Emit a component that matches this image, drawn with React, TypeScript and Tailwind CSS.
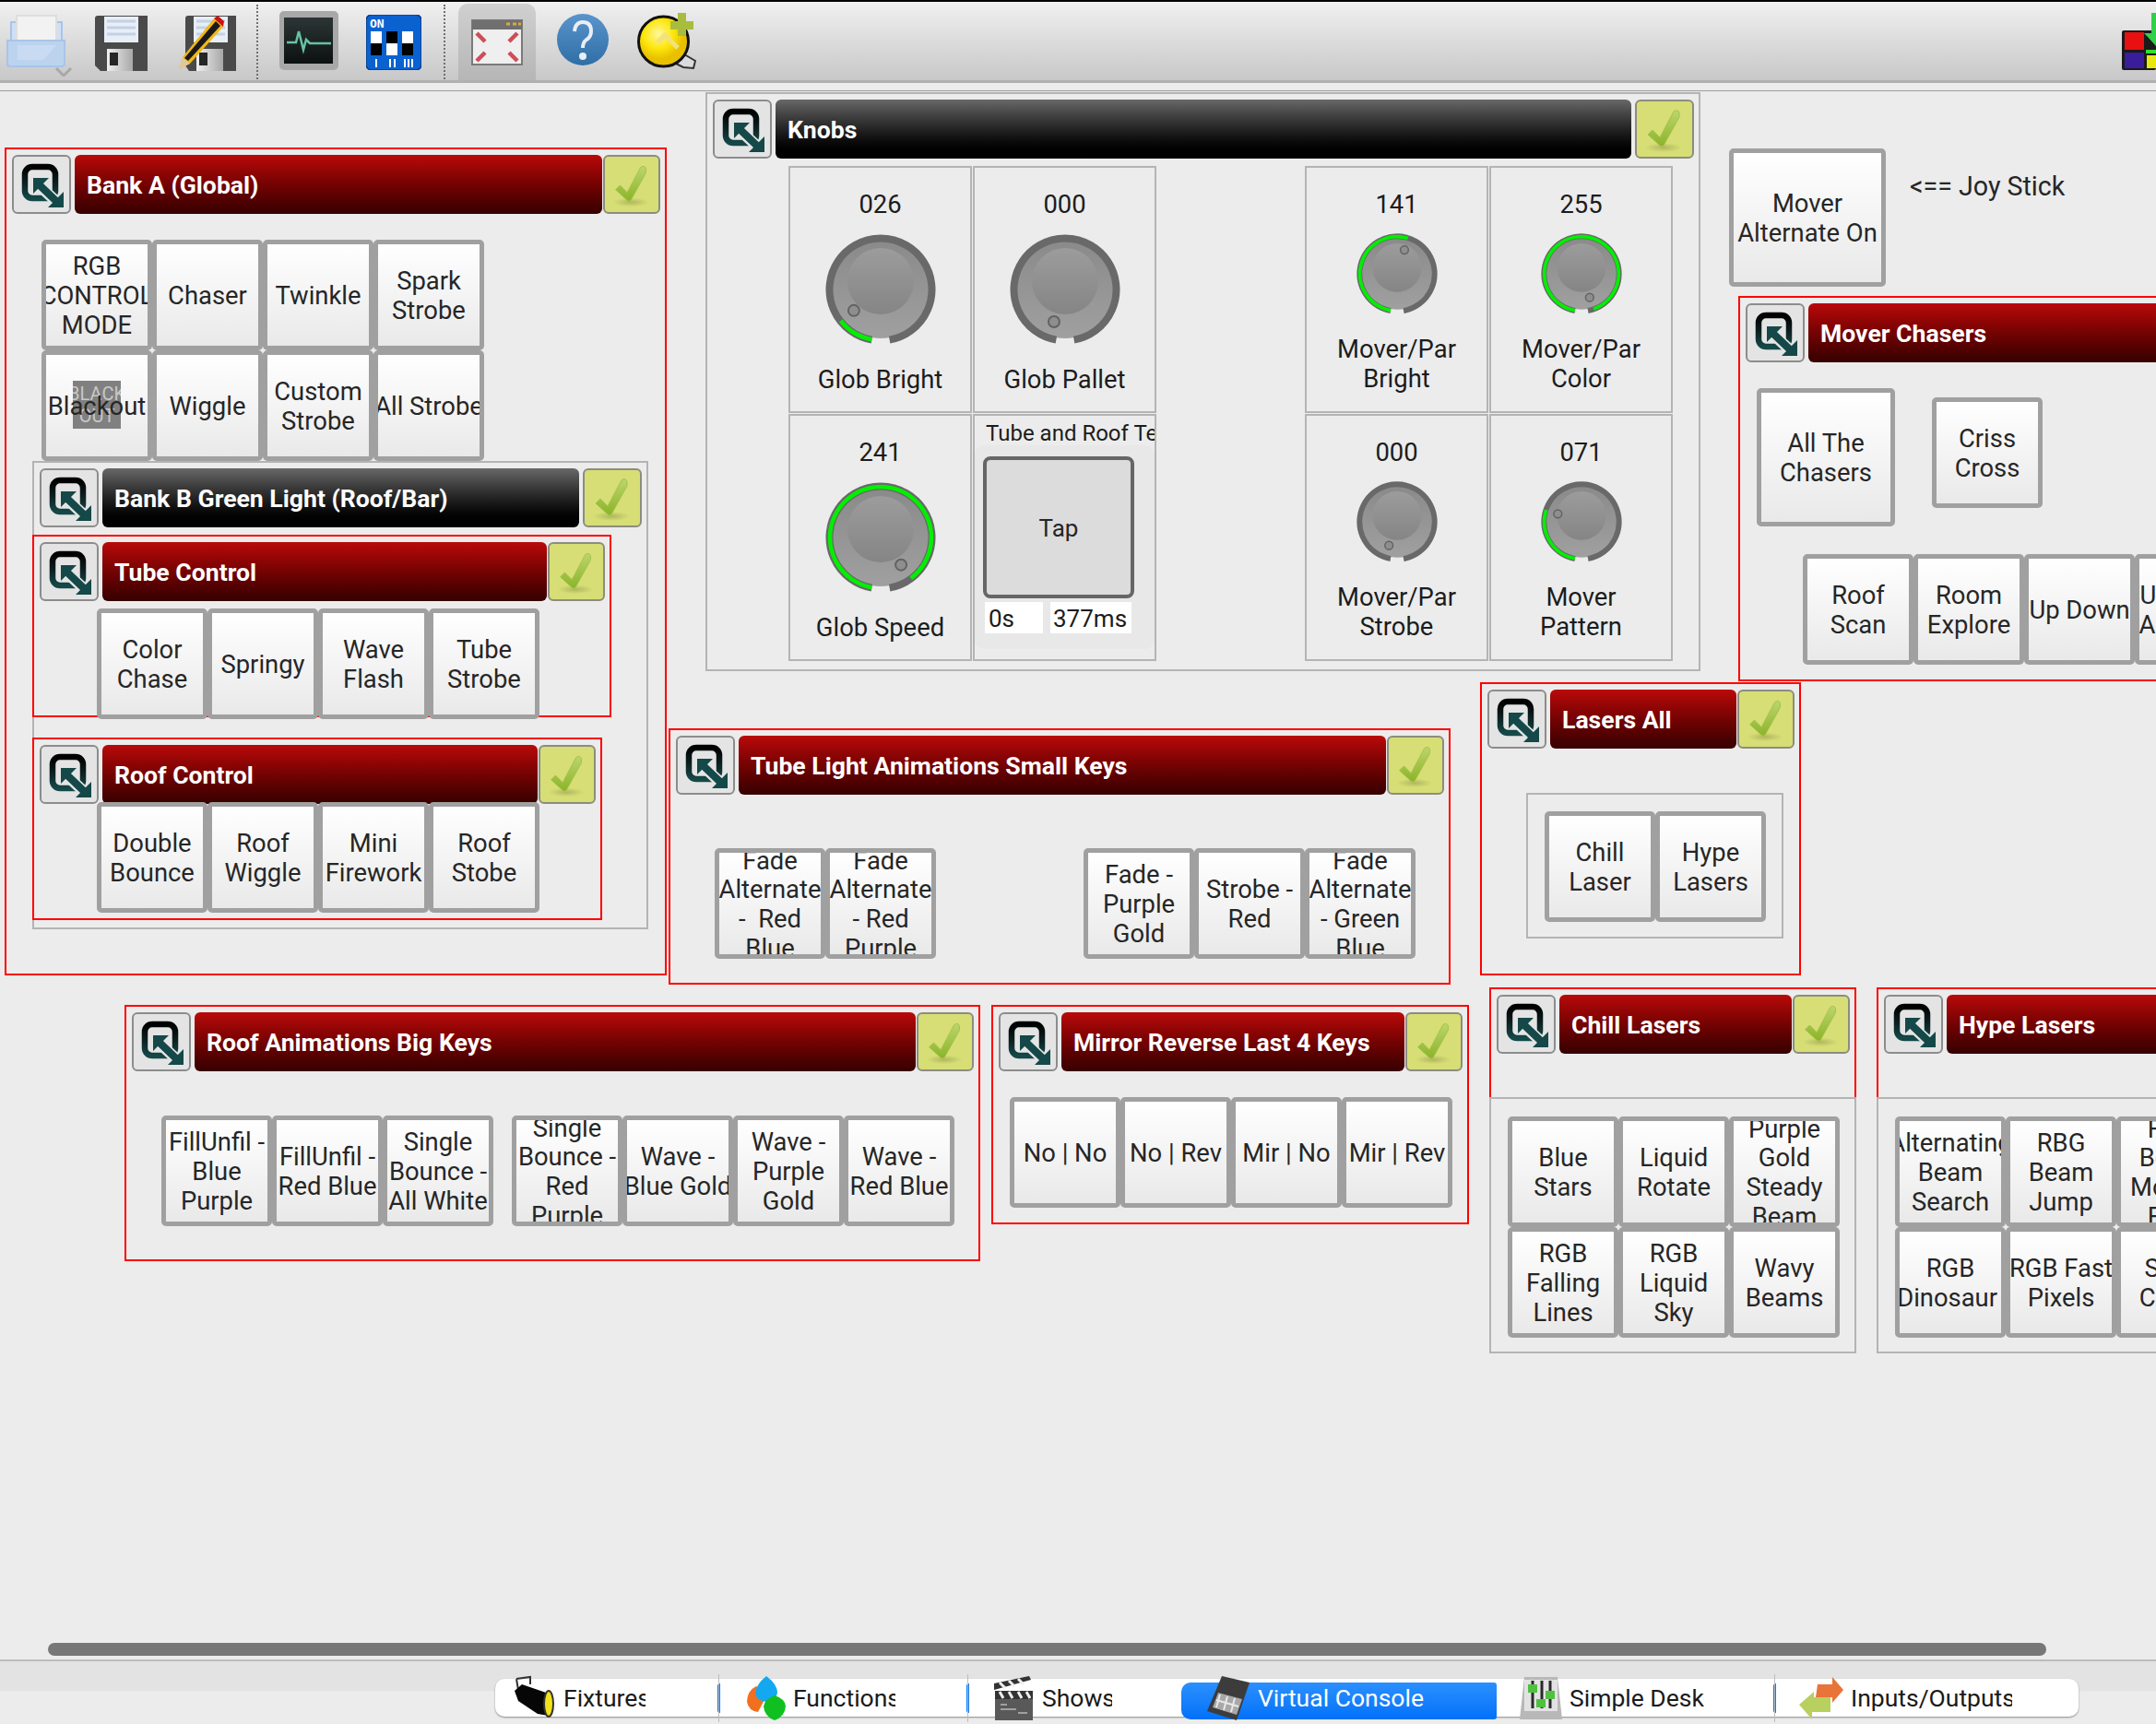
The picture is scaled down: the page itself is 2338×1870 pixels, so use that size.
import React from "react";

function polar(a: number, r: number) {
  const t = (a * Math.PI) / 180;
  return [60 - r * Math.sin(t), 60 + r * Math.cos(t)];
}
function arc(a0: number, a1: number, r: number) {
  const [x0, y0] = polar(a0, r);
  const [x1, y1] = polar(a1, r);
  return `M${x0} ${y0}A${r} ${r} 0 ${a1 - a0 > 180 ? 1 : 0} 1 ${x1} ${y1}`;
}

function Knob({ value, small }: { value: number; small?: boolean }) {
  const end = 19 + (value / 255) * 322;
  const [dx, dy] = polar(end, 37);
  return (
    <svg viewBox="0 0 120 120" className={small ? "h-[88px] w-[88px] shrink-0" : "h-[120px] w-[120px] shrink-0"}>
      <defs>
        <linearGradient id="kOuter" x1="0" y1="0" x2="0" y2="1">
          <stop offset="0" stopColor="#8a8a8a" />
          <stop offset="1" stopColor="#a0a0a0" />
        </linearGradient>
        <linearGradient id="kInner" x1="0" y1="0" x2="0" y2="1">
          <stop offset="0" stopColor="#9c9c9c" />
          <stop offset="1" stopColor="#858585" />
        </linearGradient>
      </defs>
      <circle cx="60" cy="60" r="53" fill="url(#kOuter)" />
      <circle cx="60" cy="51" r="36" fill="url(#kInner)" />
      <path d={arc(10, 350, 55.5)} fill="none" stroke="#696969" strokeWidth="8" />
      {value > 0 && <path d={arc(10, end, 55)} fill="none" stroke="#00f000" strokeWidth={small ? 5 : 4.5} />}
      <circle cx={dx} cy={dy} r="6" fill="#8e8e8e" stroke="#626262" strokeWidth="2" />
    </svg>
  );
}

function CollapseIcon() {
  return (
    <svg viewBox="0 0 60 60" className="h-[60px] w-[60px]">
      <defs>
        <linearGradient id="cGrad" x1="0" y1="0" x2="0" y2="1">
          <stop offset="0" stopColor="#000" />
          <stop offset="0.5" stopColor="#0c1f20" />
          <stop offset="1" stopColor="#154848" />
        </linearGradient>
      </defs>
      <rect x="12" y="11" width="33" height="34" rx="8" fill="none" stroke="url(#cGrad)" strokeWidth="6.5" />
      <path d="M26 30L52 54" stroke="#e4e4e4" strokeWidth="12" />
      <path d="M26 29L50 52" stroke="#154848" strokeWidth="8" />
      <path d="M21 23L38 23L21 40Z" fill="#154848" />
      <path d="M54 55L54 38L37 55Z" fill="#154848" />
    </svg>
  );
}

function CheckIcon() {
  return (
    <svg viewBox="0 0 60 60" className="h-[60px] w-[60px]">
      <defs>
        <linearGradient id="chk" x1="0" y1="0" x2="0" y2="1">
          <stop offset="0" stopColor="#bcd56c" />
          <stop offset="1" stopColor="#8ab428" />
        </linearGradient>
        <radialGradient id="chkS">
          <stop offset="0" stopColor="#8b8f4a" stopOpacity="0.5" />
          <stop offset="1" stopColor="#8b8f4a" stopOpacity="0" />
        </radialGradient>
      </defs>
      <ellipse cx="29" cy="50" rx="20" ry="5" fill="url(#chkS)" />
      <path d="M12 36L17 31L25 39L40 11Q44 8 46 12L46 17L29 48Q26 50 24 47Z" fill="url(#chk)" stroke="#a6c24a" strokeWidth="1" />
    </svg>
  );
}

function Frame({
  pos,
  title,
  dark,
  children,
}: {
  pos: string;
  title: string;
  dark?: boolean;
  children?: React.ReactNode;
}) {
  return (
    <section className={`absolute pl-[6px] pr-[5px] pt-[6px] ${pos}`}>
      <div className="flex h-[64px]">
        <div className="flex w-[64px] shrink-0 items-center justify-center rounded-[6px] border-2 border-[#8c8c8c] bg-[#e4e4e4]">
          <CollapseIcon />
        </div>
        <div
          className={
            dark
              ? "ml-[4px] flex min-w-0 flex-1 items-center rounded-[6px] bg-gradient-to-b from-[#686868] to-[#000000] pl-[13px] pt-[2px] text-[26.6px] font-bold text-white"
              : "ml-[4px] flex min-w-0 flex-1 items-center rounded-[6px] bg-gradient-to-b from-[#ba0a0a] to-[#360000] pl-[13px] pt-[2px] text-[26.6px] font-bold text-white"
          }
        >
          <span className="whitespace-nowrap">{title}</span>
        </div>
        <div
          className={
            dark
              ? "ml-[4px] flex w-[64px] shrink-0 items-center justify-center rounded-[6px] border-2 border-[#8c8c80] bg-[#d6de75]"
              : "ml-[1px] flex w-[62px] shrink-0 items-center justify-center rounded-[6px] border-2 border-[#8c8c80] bg-[#d6de75]"
          }
        >
          <CheckIcon />
        </div>
      </div>
      {children}
    </section>
  );
}

function Btn({ lines, size = "h-[120px] w-[120px]", children }: { lines: string[]; size?: string; children?: React.ReactNode }) {
  return (
    <button
      className={`relative flex shrink-0 flex-col items-center justify-center overflow-hidden rounded-[5px] border-[5px] border-[#a0a0a0] bg-gradient-to-b from-[#ffffff] to-[#e9e9e9] pt-[4px] text-[27.4px] leading-[31.7px] text-[#262626] ${size}`}
    >
      {children}
      {lines.map((l, i) => (
        <span key={i} className="relative whitespace-pre">
          {l}
        </span>
      ))}
    </button>
  );
}

function KnobCell({ value, label, small }: { value: string; label: string[]; small?: boolean }) {
  return (
    <div className="flex h-[268px] w-[199px] flex-col items-center border-2 border-[#b4b4b4] text-[27.4px] leading-[32px] text-[#1c1c1c]">
      <div className="mt-[24px] h-[32px]">{value}</div>
      <div className={small ? "mt-[15px]" : "mt-[16px]"}>
        <Knob value={Number(value)} small={small} />
      </div>
      <div className="mt-[22px] text-center">
        {label.map((l) => (
          <div key={l} className="whitespace-nowrap">
            {l}
          </div>
        ))}
      </div>
    </div>
  );
}

function Toolbar() {
  return (
    <header className="flex h-[90px] shrink-0 border-t-2 border-b-[3px] border-t-black border-b-[#b0b0b0] bg-gradient-to-b from-[#f0f0f0] to-[#c8c8c8]">
      <svg viewBox="0 0 71 68" className="ml-[7px] mt-[13px] h-[68px] w-[71px] shrink-0">
        <rect x="5" y="9" width="55" height="26" fill="#cfe0f5" stroke="#a8c4e8" strokeWidth="2" />
        <rect x="11" y="2" width="43" height="30" fill="#f2f2f2" stroke="#dedede" strokeWidth="2" />
        <path d="M1 29H63V54Q63 57 60 57H4Q1 57 1 54Z" fill="#bcd3ef" stroke="#a9c4e8" strokeWidth="2" />
        <path d="M12 34H54L40 50H12Z" fill="#c8dbf3" />
        <path d="M54 59L62 67L70 59" fill="none" stroke="#a8a8a8" strokeWidth="3" />
      </svg>
      <svg viewBox="0 0 57 60" className="ml-[25px] mt-[15px] h-[60px] w-[57px] shrink-0">
        <defs>
          <linearGradient id="shut" x1="0" y1="0" x2="1" y2="0">
            <stop offset="0" stopColor="#f0f0f0" />
            <stop offset="1" stopColor="#a8a8a8" />
          </linearGradient>
        </defs>
        <path d="M0 3Q0 0 3 0H57V60H6L0 54Z" fill="#4b4a4b" />
        <rect x="10" y="1" width="37" height="28" fill="#e8eef6" />
        <path d="M13 6H44M13 13H44M13 20H44" stroke="#c3d1e4" strokeWidth="3" />
        <path d="M13 36H41V60H13Z" fill="url(#shut)" />
        <rect x="16" y="40" width="9" height="14" fill="#262626" />
      </svg>
      <svg viewBox="0 0 63 60" className="ml-[33px] mt-[15px] h-[60px] w-[63px] shrink-0">
        <path d="M8 3Q8 0 11 0H63V60H12L8 54Z" fill="#4b4a4b" />
        <rect x="17" y="1" width="37" height="28" fill="#e8eef6" />
        <path d="M20 6H51M20 13H51M20 20H51" stroke="#c3d1e4" strokeWidth="3" />
        <path d="M20 36H49V60H20Z" fill="url(#shut)" />
        <rect x="23" y="40" width="9" height="14" fill="#262626" />
        <path d="M39 3L49 12L13 52L1 58L5 45Z" fill="#f0b818" />
        <path d="M41 6L46 11L11 49L7 46Z" fill="#1a1a1a" />
        <path d="M5 45L13 52L1 58Z" fill="#e0c89a" />
        <path d="M39 3L43 0L50 6L49 12Z" fill="#d01010" />
      </svg>
      <div className="ml-[22px] mt-[3px] h-[81px] border-l-2 border-dotted border-[#707070]" />
      <svg viewBox="0 0 64 64" className="ml-[23px] mt-[10px] h-[64px] w-[64px] shrink-0">
        <defs>
          <linearGradient id="scr" x1="0" y1="0" x2="0" y2="1">
            <stop offset="0" stopColor="#2c3535" />
            <stop offset="1" stopColor="#0c1010" />
          </linearGradient>
        </defs>
        <rect x="0" y="0" width="64" height="64" rx="5" fill="#a8a8a8" />
        <rect x="5" y="7" width="53" height="50" fill="url(#scr)" />
        <path d="M8 34H18L21 22L26 42L29 31L33 35H56" fill="none" stroke="#66c2a5" strokeWidth="2.5" />
      </svg>
      <svg viewBox="0 0 60 60" className="ml-[30px] mt-[14px] h-[60px] w-[60px] shrink-0">
        <rect x="0" y="0" width="60" height="60" rx="6" fill="#0a62d0" stroke="#053c88" strokeWidth="1.5" />
        <rect x="5" y="18" width="12" height="13" fill="#fff" />
        <rect x="5" y="31" width="12" height="13" fill="#000" />
        <rect x="22" y="18" width="12" height="13" fill="#000" />
        <rect x="22" y="31" width="12" height="13" fill="#fff" />
        <rect x="39" y="18" width="12" height="13" fill="#fff" />
        <rect x="39" y="31" width="12" height="13" fill="#000" />
        <text x="4" y="14" fontSize="13" fontWeight="700" fill="#fff" fontFamily="'DejaVu Sans Mono', monospace">ON</text>
        <path d="M11 48V57M26 48V57M31 48V57M42 48V57M46 48V57M50 48V57" stroke="#fff" strokeWidth="2" />
      </svg>
      <div className="ml-[24px] mt-[3px] h-[81px] border-l-2 border-dotted border-[#707070]" />
      <div className="ml-[14px] mt-[2px] flex h-[83px] w-[84px] shrink-0 items-center justify-center rounded-t-[10px] bg-gradient-to-b from-[#d0d0d0] to-[#b6b6b6]">
        <svg viewBox="0 0 56 50" className="h-[50px] w-[56px]">
          <rect x="1" y="1" width="54" height="48" fill="#efefef" stroke="#7a7a7a" strokeWidth="2" />
          <rect x="1" y="1" width="54" height="10" fill="#6f6f6f" />
          <path d="M38 5H42M45 5H49M51 5H54" stroke="#d8aa40" strokeWidth="3" />
          <path d="M6 15L15 24M50 15L41 24M6 45L15 36M50 45L41 36" stroke="#c8323c" strokeWidth="4.5" opacity="0.85" />
        </svg>
      </div>
      <svg viewBox="0 0 58 60" className="ml-[22px] mt-[12px] h-[60px] w-[58px] shrink-0">
        <defs>
          <linearGradient id="hlp" x1="0" y1="0" x2="0" y2="1">
            <stop offset="0" stopColor="#5a94cc" />
            <stop offset="1" stopColor="#2f6ea6" />
          </linearGradient>
        </defs>
        <circle cx="29" cy="29" r="28" fill="url(#hlp)" />
        <path d="M20 20Q21 10 29 10Q38 10 38 20Q38 26 33 29Q29 32 29 38" fill="none" stroke="#e8eef4" strokeWidth="4" />
        <circle cx="29" cy="47" r="4" fill="#e8eef4" />
      </svg>
      <svg viewBox="0 0 64 62" className="ml-[30px] mt-[12px] h-[62px] w-[64px] shrink-0">
        <defs>
          <radialGradient id="blb" cx="0.4" cy="0.35">
            <stop offset="0" stopColor="#fff7a0" />
            <stop offset="0.6" stopColor="#fde60a" />
            <stop offset="1" stopColor="#e8c000" />
          </radialGradient>
        </defs>
        <path d="M46 42L63 52L61 60L50 59L40 54Z" fill="#d8dcdc" stroke="#333" strokeWidth="2" />
        <circle cx="28.5" cy="31" r="27" fill="url(#blb)" stroke="#111" strokeWidth="3" />
        <path d="M22 32L30 24L36 30L44 38" fill="none" stroke="#f2e27a" strokeWidth="5" />
        <path d="M44 0H53V9H61V18H53V25H44V18H36V9H44Z" fill="#a9bd3c" />
      </svg>
      <svg viewBox="0 0 37 62" className="ml-auto mt-[12px] h-[62px] w-[37px] shrink-0">
        <rect x="0" y="19" width="37" height="43" fill="#1a1a1a" rx="2" />
        <rect x="3" y="21" width="21" height="19" fill="#e81010" />
        <rect x="3" y="43" width="21" height="17" fill="#3a1d9a" />
        <rect x="27" y="46" width="10" height="14" fill="#e8e810" />
        <rect x="26" y="40" width="11" height="4" fill="#30e030" />
        <path d="M32 0H37V36L28 26L24 22H32Z" fill="#30d048" />
      </svg>
    </header>
  );
}

function Tab({ width, label, textW, icon, active, mark }: { width: string; label: string; textW: string; icon: React.ReactNode; active?: boolean; mark?: boolean }) {
  return (
    <div className={`relative flex h-full shrink-0 items-center ${width}`}>
      {active && <div className="absolute inset-x-0 top-[4px] -bottom-[3px] rounded-l-[10px] rounded-r-[3px] bg-gradient-to-b from-[#2a90ff] to-[#0070f8]" />}
      {mark && <div className="absolute -left-[1px] top-[5px] h-[32px] w-[3px] rounded-l-full bg-[#0a78f0]" />}
      {mark && <div className="absolute left-0 -top-[5px] h-[52px] w-px bg-[#bdbdbd]" />}
      {icon}
      <span className={`relative overflow-hidden whitespace-nowrap text-[26.5px] leading-[32px] ${textW} ${active ? "text-white" : "text-[#1a1a1a]"}`}>{label}</span>
    </div>
  );
}

function Tabs() {
  return (
    <nav className="ml-[537px] mt-[19px] flex h-[41px] w-[1717px] rounded-[10px] bg-white shadow-[0_1px_2px_#8a8a8a]">
      <Tab
        width="w-[242px]"
        label="Fixtures"
        textW="ml-[8px] w-[89px]"
        icon={
          <svg viewBox="0 0 46 46" className="relative ml-[20px] h-[46px] w-[46px] shrink-0 overflow-visible">
            <path d="M3 2L18 0L18 8M3 2L5 14" fill="none" stroke="#333" strokeWidth="2" />
            <path d="M1 15L9 8L38 18L38 42L26 40L5 26Z" fill="#060606" />
            <ellipse cx="38" cy="29" rx="5" ry="14" fill="#f2e21c" stroke="#333" strokeWidth="2" />
          </svg>
        }
      />
      <Tab
        width="w-[270px]"
        mark
        label="Functions"
        textW="ml-[8px] w-[111px]"
        icon={
          <svg viewBox="0 0 42 48" className="relative ml-[31px] h-[48px] w-[42px] shrink-0 overflow-visible">
            <path d="M10 11Q0 16 0 28Q2 38 12 39L22 20Z" fill="#f07020" />
            <path d="M21 0Q33 9 33 18Q32 27 21 28Q10 27 9 18Q10 9 21 0Z" fill="#14a8f0" />
            <path d="M30 21Q42 25 42 33Q41 44 30 48Q19 44 18 33Q19 25 30 21Z" fill="#10c020" />
          </svg>
        }
      />
      <Tab
        width="w-[232px]"
        mark
        label="Shows"
        textW="ml-[10px] w-[76px]"
        icon={
          <svg viewBox="0 0 42 48" className="relative ml-[29px] h-[48px] w-[42px] shrink-0 overflow-visible">
            <path d="M0 15L40 4L38 0L0 8Z" fill="#333" />
            <path d="M6 7L12 13M16 5L22 11M26 3L32 9" stroke="#eee" strokeWidth="3" />
            <rect x="1" y="16" width="41" height="9" fill="#333" />
            <path d="M6 17L10 24M16 17L20 24M26 17L30 24M35 17L39 24" stroke="#eee" strokeWidth="3" />
            <rect x="1" y="25" width="41" height="23" fill="#595959" />
            <path d="M7 31H14M7 36H24M26 40H36" stroke="#a0a0a0" strokeWidth="2" />
          </svg>
        }
      />
      <Tab
        width="w-[342px]"
        active
        label="Virtual Console"
        textW="ml-[9px] w-[182px]"
        icon={
          <svg viewBox="0 0 46 48" className="relative ml-[28px] h-[48px] w-[46px] shrink-0 overflow-visible">
            <path d="M16 0L46 7L32 48L0 38Z" fill="#3c3c3c" />
            <path d="M12 18L38 25L32 42L6 34Z" fill="#a8a8a8" />
            <path d="M10 26L34 33M14 20L10 34M22 22L18 37M30 24L26 39" stroke="#e8e8e8" strokeWidth="2" />
          </svg>
        }
      />
      <Tab
        width="w-[301px]"
        label="Simple Desk"
        textW="ml-[8px] w-[146px]"
        icon={
          <svg viewBox="0 0 46 46" className="relative ml-[25px] h-[46px] w-[46px] shrink-0 overflow-visible">
            <path d="M5 0H41L46 46H0Z" fill="#b8b8b8" />
            <rect x="5" y="3" width="36" height="34" fill="#e2e2e2" />
            <path d="M14 4V34M24 4V34M33 4V34" stroke="#2a2a2a" strokeWidth="3" />
            <rect x="9" y="8" width="10" height="9" fill="#50c040" />
            <rect x="18" y="24" width="10" height="9" fill="#50c040" />
            <rect x="28" y="15" width="10" height="9" fill="#50c040" />
          </svg>
        }
      />
      <Tab
        width="w-[329px]"
        mark
        label="Inputs/Outputs"
        textW="ml-[7px] w-[175px]"
        icon={
          <svg viewBox="0 0 49 46" className="relative ml-[27px] h-[46px] w-[49px] shrink-0 overflow-visible">
            <path d="M20 8H36V0L48 14L36 28V22H18Z" fill="#e8743a" />
            <path d="M34 22H16V16L0 30L14 46V38H34Z" fill="#b8d060" />
          </svg>
        }
      />
    </nav>
  );
}

export default function App() {
  return (
    <div className="flex h-[1870px] w-[2338px] flex-col overflow-hidden bg-[#ececec] font-['Roboto',sans-serif]">
      <Toolbar />
      <div className="h-[9px] shrink-0 border-b border-[#9c9c9c]" />
      <main className="relative min-h-0 flex-1 overflow-hidden">
        {/* Bank A */}
        <Frame pos="left-[5px] top-[61px] h-[898px] w-[718px] border-2 border-[#ff0000]" title="Bank A (Global)">
          <div className="absolute left-[38px] top-[98px] grid grid-cols-[repeat(4,120px)]">
            <Btn lines={["RGB", "CONTROL", "MODE"]} />
            <Btn lines={["Chaser"]} />
            <Btn lines={["Twinkle"]} />
            <Btn lines={["Spark", "Strobe"]} />
            <Btn lines={["Blackout"]}>
              <span className="absolute left-[29px] top-[28px] flex h-[52px] w-[52px] flex-col items-center justify-center overflow-hidden bg-[#808080] text-[20px] leading-[24px] text-[#c8c8c8]">
                <span>BLACK</span>
                <span>OUT</span>
              </span>
            </Btn>
            <Btn lines={["Wiggle"]} />
            <Btn lines={["Custom", "Strobe"]} />
            <Btn lines={["All Strobe"]} />
          </div>
          <Frame pos="left-[28px] top-[338px] h-[508px] w-[668px] border-2 border-[#b4b4b4]" title="Bank B Green Light (Roof/Bar)" dark>
            <Frame pos="-left-[2px] top-[78px] h-[198px] w-[628px] border-2 border-[#ff0000]" title="Tube Control">
              <div className="absolute left-[68px] top-[78px] flex">
                <Btn lines={["Color", "Chase"]} />
                <Btn lines={["Springy"]} />
                <Btn lines={["Wave", "Flash"]} />
                <Btn lines={["Tube", "Strobe"]} />
              </div>
            </Frame>
            <Frame pos="-left-[2px] top-[298px] h-[198px] w-[618px] border-2 border-[#ff0000]" title="Roof Control">
              <div className="absolute left-[68px] top-[68px] flex">
                <Btn lines={["Double", "Bounce"]} />
                <Btn lines={["Roof", "Wiggle"]} />
                <Btn lines={["Mini", "Firework"]} />
                <Btn lines={["Roof", "Stobe"]} />
              </div>
            </Frame>
          </Frame>
        </Frame>

        {/* Knobs */}
        <Frame pos="left-[765px] top-[1px] h-[628px] w-[1079px] border-2 border-[#b4b4b4]" title="Knobs" dark>
          <div className="absolute left-[88px] top-[78px] grid grid-cols-[repeat(2,199px)] gap-[1px]">
            <KnobCell value="026" label={["Glob Bright"]} />
            <KnobCell value="000" label={["Glob Pallet"]} />
            <KnobCell value="241" label={["Glob Speed"]} />
            <div className="flex h-[268px] w-[199px] flex-col overflow-hidden border-2 border-[#b4b4b4]">
              <div className="h-[32px] shrink-0 whitespace-nowrap pl-[12px] pt-[6px] text-[24px] leading-[26px] text-[#1c1c1c]">Tube and Roof Tempo</div>
              <div className="mb-[11px] flex-1 rounded-[10px] bg-[#e8e8e8] pl-[9px] pt-[12px]">
                <div className="flex h-[154px] w-[164px] items-center justify-center rounded-[8px] border-4 border-[#666666] bg-[#dcdcdc] pt-[2px] text-[26px] text-[#262626]">Tap</div>
                <div className="ml-[2px] mt-[4px] flex gap-[8px] text-[26px] leading-[36px] text-[#1c1c1c]">
                  <div className="h-[34px] w-[63px] bg-white pl-[4px]">0s</div>
                  <div className="h-[34px] w-[88px] bg-white pl-[3px]">377ms</div>
                </div>
              </div>
            </div>
          </div>
          <div className="absolute left-[648px] top-[78px] grid grid-cols-[repeat(2,199px)] gap-[1px]">
            <KnobCell small value="141" label={["Mover/Par", "Bright"]} />
            <KnobCell small value="255" label={["Mover/Par", "Color"]} />
            <KnobCell small value="000" label={["Mover/Par", "Strobe"]} />
            <KnobCell small value="071" label={["Mover", "Pattern"]} />
          </div>
        </Frame>

        {/* Free-standing mover button + label */}
        <div className="absolute left-[1875px] top-[62px]">
          <Btn lines={["Mover", "Alternate On"]} size="h-[150px] w-[170px]" />
        </div>
        <div className="absolute left-[2071px] top-[87px] whitespace-nowrap text-[28.6px] leading-[32px] text-[#262626]">{"<== Joy Stick"}</div>

        {/* Mover Chasers */}
        <Frame pos="left-[1885px] top-[222px] h-[418px] w-[700px] border-2 border-[#ff0000]" title="Mover Chasers">
          <div className="absolute left-[18px] top-[98px]">
            <Btn lines={["All The", "Chasers"]} size="h-[150px] w-[150px]" />
          </div>
          <div className="absolute left-[208px] top-[108px]">
            <Btn lines={["Criss", "Cross"]} />
          </div>
          <div className="absolute left-[68px] top-[278px] flex">
            <Btn lines={["Roof", "Scan"]} />
            <Btn lines={["Room", "Explore"]} />
            <Btn lines={["Up Down"]} />
            <Btn lines={["Up Down", "Alternate"]} />
          </div>
        </Frame>

        {/* Lasers All */}
        <Frame pos="left-[1605px] top-[641px] h-[318px] w-[348px] border-2 border-[#ff0000]" title="Lasers All">
          <div className="absolute left-[48px] top-[118px] h-[158px] w-[279px] border-2 border-[#b4b4b4]">
            <div className="ml-[18px] mt-[18px] flex">
              <Btn lines={["Chill", "Laser"]} />
              <Btn lines={["Hype", "Lasers"]} />
            </div>
          </div>
        </Frame>

        {/* Tube Light */}
        <Frame pos="left-[725px] top-[691px] h-[278px] w-[848px] border-2 border-[#ff0000]" title="Tube Light Animations Small Keys">
          <div className="absolute left-[48px] top-[128px] flex">
            <Btn lines={["Fade", "Alternate", "-  Red", "Blue"]} />
            <Btn lines={["Fade", "Alternate", "- Red", "Purple"]} />
          </div>
          <div className="absolute left-[448px] top-[128px] flex">
            <Btn lines={["Fade -", "Purple", "Gold"]} />
            <Btn lines={["Strobe -", "Red"]} />
            <Btn lines={["Fade", "Alternate", "- Green", "Blue"]} />
          </div>
        </Frame>

        {/* Roof Animations */}
        <Frame pos="left-[135px] top-[991px] h-[278px] w-[928px] border-2 border-[#ff0000]" title="Roof Animations Big Keys">
          <div className="absolute left-[38px] top-[118px] flex">
            <Btn lines={["FillUnfil -", "Blue", "Purple"]} />
            <Btn lines={["FillUnfil -", "Red Blue"]} />
            <Btn lines={["Single", "Bounce -", "All White"]} />
          </div>
          <div className="absolute left-[418px] top-[118px] flex">
            <Btn lines={["Single", "Bounce -", "Red", "Purple"]} />
            <Btn lines={["Wave -", "Blue Gold"]} />
            <Btn lines={["Wave -", "Purple", "Gold"]} />
            <Btn lines={["Wave -", "Red Blue"]} />
          </div>
        </Frame>

        {/* Mirror */}
        <Frame pos="left-[1075px] top-[991px] h-[238px] w-[518px] border-2 border-[#ff0000]" title="Mirror Reverse Last 4 Keys">
          <div className="absolute left-[18px] top-[98px] flex">
            <Btn lines={["No | No"]} />
            <Btn lines={["No | Rev"]} />
            <Btn lines={["Mir | No"]} />
            <Btn lines={["Mir | Rev"]} />
          </div>
        </Frame>

        {/* Chill Lasers */}
        <Frame pos="left-[1615px] top-[972px] h-[119px] w-[398px] border-2 border-b-0 border-[#ff0000]" title="Chill Lasers" />
        <div className="absolute left-[1615px] top-[1091px] h-[278px] w-[398px] border-2 border-[#b4b4b4]">
          <div className="ml-[18px] mt-[19px] grid grid-cols-[repeat(3,120px)]">
            <Btn lines={["Blue", "Stars"]} />
            <Btn lines={["Liquid", "Rotate"]} />
            <Btn lines={["Purple", "Gold", "Steady", "Beam"]} />
            <Btn lines={["RGB", "Falling", "Lines"]} />
            <Btn lines={["RGB", "Liquid", "Sky"]} />
            <Btn lines={["Wavy", "Beams"]} />
          </div>
        </div>

        {/* Hype Lasers */}
        <Frame pos="left-[2035px] top-[972px] h-[119px] w-[398px] border-2 border-b-0 border-[#ff0000]" title="Hype Lasers" />
        <div className="absolute left-[2035px] top-[1091px] h-[278px] w-[398px] border-2 border-[#b4b4b4]">
          <div className="ml-[18px] mt-[19px] grid grid-cols-[repeat(3,120px)]">
            <Btn lines={["Alternating", "Beam", "Search"]} />
            <Btn lines={["RBG", "Beam", "Jump"]} />
            <Btn lines={["Fast", "Beam", "Moving", "Fast"]} />
            <Btn lines={["RGB", "Dinosaur "]} />
            <Btn lines={["RGB Fast", "Pixels"]} />
            <Btn lines={["Slow", "Cross"]} />
          </div>
        </div>
      </main>
      <div className="h-[18px] shrink-0 pl-[52px]">
        <div className="h-[14px] w-[2167px] rounded-full bg-[#777777]" />
      </div>
      <footer className="h-[70px] shrink-0 border-t-2 border-[#bcbcbc] bg-[linear-gradient(#e3e3e3_32px,#ececec_32px)]">
        <Tabs />
      </footer>
    </div>
  );
}
